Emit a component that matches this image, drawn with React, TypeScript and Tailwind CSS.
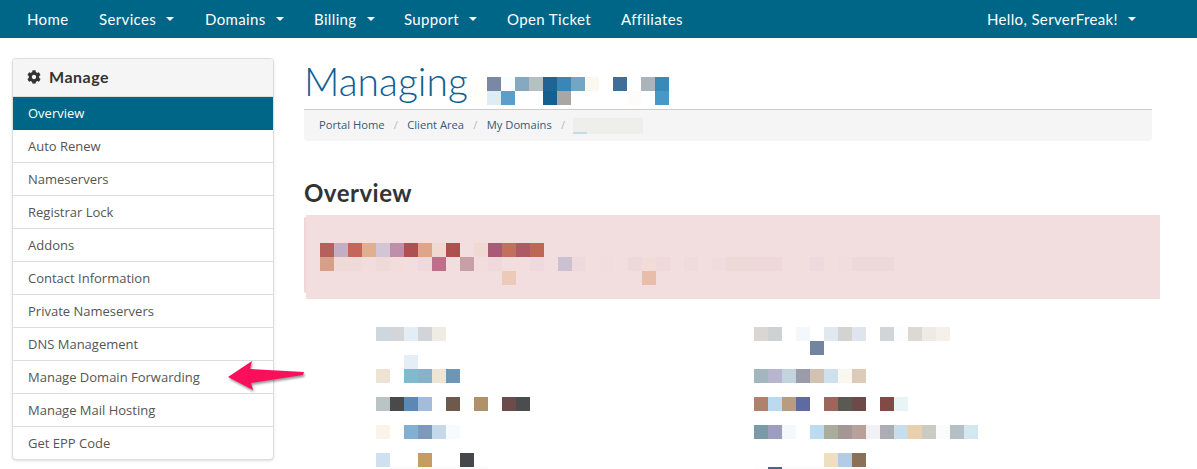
import { FaCog } from "react-icons/fa";

const W = "#ffffff";
const A = "#f2dede";

function Mosaic({ rows }: { rows: string[][] }) {
  return (
    <div className="flex flex-col">
      {rows.map((row, i) => (
        <div key={i} className="flex h-3.5">
          {row.map((c, j) => (
            <div key={j} className="w-3.5 h-3.5 shrink-0" style={{ backgroundColor: c }} />
          ))}
        </div>
      ))}
    </div>
  );
}

const titleRows = [
  ["#fffef9", "#7a87a5", "#fafdff", "#84a9c0", "#b5c0c0", "#1f6494", "#3a87b5", "#73a6c4", "#fbf8ef", W, "#3f6e99", W, "#adb3ba", "#3a8ab8"],
  ["#fffef9", "#dcedf6", "#5a9ec9", W, W, "#14608f", "#aba6a6", W, W, W, W, "#fdfcfa", W, "#4699c6"],
];

const alertRows = [
  ["#b5605c", "#c3aec3", "#c4675b", "#e0af90", "#d3c4d6", "#bf8ea9", "#ae5151", "#dea588", "#f0d9d1", "#ae504e", A, "#efd9d2", "#ab5a75", "#c2705e", "#ae5a64", "#bc6854"],
  ["#d69f88", "#f0dad8", "#efdad8", "#f2dcdc", "#efdad8", "#f2dcdc", A, "#efd9dc", "#bd6f8c", A, "#c79fa7", "#f2dcde", "#efd9dc", A, A, "#efd9de", A, "#cbc1d1", "#eed9dc", A, "#f1dcde", A, "#eed9da", "#f2dcd8", "#efd9da", A, "#efdbdb", A, "#f1dcdd", "#eed9d9", "#eed9d9", "#eed8da", "#eed8da", A, A, "#eed9dc", A, "#f1dddd", "#eed9da", "#eed9da", "#eed9da"],
  [A, A, A, A, A, A, A, A, A, A, A, A, A, "#ecc9b9", A, A, A, A, A, A, A, A, A, "#e8bda9"],
];

const leftRows = [
  ["#cdd8de", "#d4d5d8", "#e4edf5", "#d3d4d7", "#efebe5"],
  [W],
  [W, W, "#e6eef5"],
  ["#ede2d4", W, "#81b9cf", "#8ab1ca", "#ece6d6", "#6d96b5"],
  [W],
  ["#bac4c6", "#4a4a4a", "#5c88b5", "#a2bcd9", "#fdffff", "#6e5a4c", "#fdffff", "#b0926a", W, "#6c4b4d", "#4b4c4e"],
  [W],
  ["#f9f4ea", "#fffffd", "#82b0d3", "#7d9aba", "#c5d9ea", "#f8fbfe"],
  [W],
  ["#cfe1f0", W, W, "#c69c62", W, W, "#46474b"],
  [W, "#fafafa", "#fafafa", "#fafafa", "#fafafa", "#fafafa", "#fafafa", "#fafafa"],
];

const rightRows = [
  ["#dad6d3", "#d0d1d3", W, "#f3f8fc", W, "#e0e8f0", "#d3d3d1", "#dee5ee", W, "#d3d4d6", "#fcfdfe", "#dcd9d3", "#eeeae5", "#f5f1ea"],
  [W, W, W, W, "#7185a0"],
  [W],
  ["#a3b6bd", "#b6b6cf", "#c3d4df", "#9a9ca9", "#d3c1b2", "#cfe0ed", "#faf7f0", "#ddcbb9"],
  [W],
  ["#b0826d", "#badaf0", "#b99c80", "#5e6aa0", W, "#9c665c", "#595a53", "#6d4947", W, "#814a46", "#e8f4f6"],
  [W],
  ["#7b9aa8", "#9d9ebd", "#f4f8fb", W, "#bbdcee", "#aaad9b", "#a69796", "#b9a199", "#eff1f3", "#abaeb3", "#c6ddec", "#e8cfae", "#cbcbc3", "#fbfbfb", "#b4bfc6", "#d3e7f0"],
  [W],
  [W, W, W, W, W, "#eedfbf", "#b1cce4", "#8a7058"],
  ["#fdfdfd", "#4f6482", "#fafafa", "#fafafa", "#fafafa", "#fafafa", "#fafafa", "#fafafa", "#fdfdfd"],
];

function Caret() {
  return <span className="ml-2.5 inline-block w-0 h-0 border-x-4 border-x-transparent border-t-4 border-t-white" />;
}

const nav: [string, boolean, string][] = [
  ["Home", false, "w-[72px]"],
  ["Services", true, "w-[106px]"],
  ["Domains", true, "w-[109px]"],
  ["Billing", true, "w-[90px]"],
  ["Support", true, "w-[103px]"],
  ["Open Ticket", false, "w-[114px]"],
  ["Affiliates", false, "w-[80px]"],
];

const items = [
  "Auto Renew",
  "Nameservers",
  "Registrar Lock",
  "Addons",
  "Contact Information",
  "Private Nameservers",
  "DNS Management",
  "Manage Domain Forwarding",
  "Manage Mail Hosting",
  "Get EPP Code",
];

export default function App() {
  return (
    <div className="relative h-[469px] w-[1197px] overflow-hidden bg-white font-['Open_Sans',sans-serif]">
      <nav className="flex h-[38px] items-center bg-[#006687] pl-[27px] pr-[61px] font-['Lato',sans-serif] text-[15px] tracking-[0.36px] text-white">
        {nav.map(([label, caret, w]) => (
          <div key={label} className={`flex items-center ${w}`}>
            {label}
            {caret && <Caret />}
          </div>
        ))}
        <div className="ml-auto flex items-center">
          Hello, ServerFreak!
          <Caret />
        </div>
      </nav>

      <div className="flex pl-3 pt-5">
        <aside className="h-[402px] w-[262px] shrink-0 overflow-hidden rounded border border-[#dddddd] bg-white shadow-sm">
          <div className="flex h-[38px] items-center gap-2 border-b border-[#dddddd] bg-[#f5f5f5] pb-0.5 pl-[14px] font-['Lato',sans-serif] text-base font-bold tracking-[0.5px] text-[#333333]">
            <FaCog className="h-[14px] w-[14px]" />
            Manage
          </div>
          <div className="flex h-[33px] items-center bg-[#006687] pl-[15px] text-[13px] text-white">
            Overview
          </div>
          {items.map((t, i) => (
            <div
              key={t}
              className={`flex h-[33px] items-center pl-[15px] text-[13px] text-[#555555] ${i < items.length - 1 ? "border-b border-[#dddddd] pt-px" : ""}`}
            >
              {t}
            </div>
          ))}
        </aside>

        <main className="ml-[30px] w-[856px] shrink-0">
          <div className="flex h-[52px] w-[848px] items-end border-b border-[#cccccc] pb-[5px]">
            <h1 className="h-[46px] font-['Lato',sans-serif] text-[39px] leading-[46px] font-light text-[#0e6094]">
              Managing
            </h1>
          </div>
          <div className="flex h-[31px] w-[848px] items-center rounded-b bg-[#f5f5f5] pl-[15px] text-[11.2px] text-[#58595b]">
            <span className="text-[#34597a]">Portal Home</span>
            <span className="mx-[9.25px] text-[#bbbbbb]">/</span>
            <span className="text-[#34597a]">Client Area</span>
            <span className="mx-[9.25px] text-[#bbbbbb]">/</span>
            <span className="text-[#34597a]">My Domains</span>
            <span className="mx-[9.25px] text-[#bbbbbb]">/</span>
            <div className="relative -ml-px h-4 w-[70px] bg-[#eeeeec]">
              <div className="absolute bottom-0 left-0 h-0.5 w-3.5 bg-[#c5d9e6]" />
            </div>
          </div>

          <h2 className="mt-[37px] font-['Lato',sans-serif] text-2xl leading-[30px] font-bold tracking-[0.5px] text-[#333333]">
            Overview
          </h2>
          <div className="mt-[7px] flex h-[84px] w-[856px] items-start">
            <div className="mt-0.5 h-[76px] w-0.5 shrink-0 rounded-l bg-[#f0d5d8]" />
            <div className="h-[84px] flex-1 bg-[#f2dede] pt-7 pl-3.5">
              <Mosaic rows={alertRows} />
            </div>
          </div>

          <div className="mt-7 flex">
            <div className="ml-[72px] w-[378px]">
              <Mosaic rows={leftRows} />
            </div>
            <Mosaic rows={rightRows} />
          </div>
        </main>
      </div>

      <div className="absolute left-[473px] top-[77px]">
        <Mosaic rows={titleRows} />
      </div>

      <svg className="absolute left-[225px] top-[359px] drop-shadow-[1px_2px_1px_rgba(0,0,0,0.4)]" width="82" height="36" viewBox="0 0 82 36">
        <polygon points="3,18 27,2 25,10 79,13 78,16 26,24 28,31" fill="#fb0f5b" />
      </svg>
    </div>
  );
}
